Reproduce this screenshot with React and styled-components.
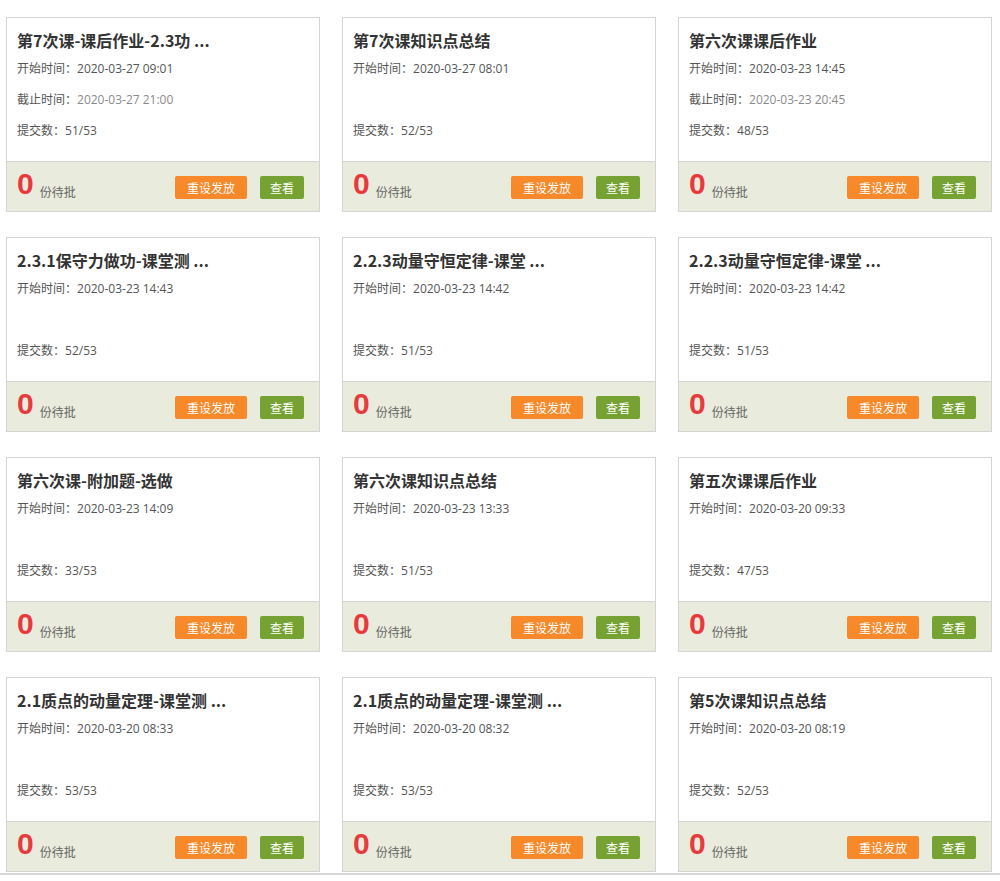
import React from "react";
import styled, { createGlobalStyle } from "styled-components";

const Global = createGlobalStyle`
  html, body { margin: 0; padding: 0; background: #fff; }
  body { font-family: "Noto Sans CJK SC", "Noto Sans", sans-serif; }
`;

const Page = styled.div`
  width: 1000px;
  height: 881px;
  overflow: hidden;
  box-sizing: border-box;
  padding: 17px 8px 0 6px;
`;

const Grid = styled.div`
  display: grid;
  grid-template-columns: repeat(3, 314px);
  column-gap: 22px;
  row-gap: 25px;
`;

const Card = styled.div`
  border: 1px solid #d4d4d4;
  background: #fff;
  display: flex;
  flex-direction: column;
`;

const Body = styled.div`
  height: 143px;
  box-sizing: border-box;
  padding: 10px 10px 0 10px;
`;

const Title = styled.div`
  font-size: 16px;
  font-weight: 700;
  color: #333;
  line-height: 24px;
  white-space: nowrap;
`;

const Info = styled.div`
  font-size: 12px;
  line-height: 31px;
  height: 31px;
  color: #555;
`;

const Muted = styled.span`
  color: ${(p) => (p.$light ? "#8a8a8a" : "#555")};
  font-family: "Open Sans", "Noto Sans CJK SC", sans-serif;
`;

const Footer = styled.div`
  height: 49px;
  box-sizing: border-box;
  border-top: 1px solid #d4d4d4;
  background: #e9ecdc;
  display: flex;
  align-items: center;
  padding: 2px 15px 0 10px;
  height: 50px;
`;

const Pending = styled.div`
  display: flex;
  align-items: flex-end;
  align-self: flex-start;
  margin-top: 5px;
  flex: 1;
`;

const Zero = styled.span`
  font-family: "Liberation Sans", Arial, sans-serif;
  font-weight: 700;
  font-size: 30px;
  line-height: 30px;
  color: #e8393c;
`;

const PendingLabel = styled.span`
  font-size: 12px;
  line-height: 14px;
  color: #666;
  margin-left: 6px;
`;

const Button = styled.button`
  border: none;
  border-radius: 2px;
  height: 23px;
  padding: 0;
  width: ${(p) => p.$w}px;
  background: ${(p) => p.$bg};
  color: #fff;
  font-family: "Noto Sans CJK SC", sans-serif;
  font-size: 12px;
  line-height: 23px;
  margin-left: ${(p) => p.$ml || 0}px;
  cursor: pointer;
`;

const BottomLine = styled.div`
  margin-top: 1px;
  margin-left: -6px;
  margin-right: -8px;
  border-top: 2px solid #d6d6d6;
`;

const items = [
  { title: "第7次课-课后作业-2.3功 ...", start: "2020-03-27 09:01", end: "2020-03-27 21:00", sub: "51/53" },
  { title: "第7次课知识点总结", start: "2020-03-27 08:01", sub: "52/53" },
  { title: "第六次课课后作业", start: "2020-03-23 14:45", end: "2020-03-23 20:45", sub: "48/53" },
  { title: "2.3.1保守力做功-课堂测 ...", start: "2020-03-23 14:43", sub: "52/53" },
  { title: "2.2.3动量守恒定律-课堂 ...", start: "2020-03-23 14:42", sub: "51/53" },
  { title: "2.2.3动量守恒定律-课堂 ...", start: "2020-03-23 14:42", sub: "51/53" },
  { title: "第六次课-附加题-选做", start: "2020-03-23 14:09", sub: "33/53" },
  { title: "第六次课知识点总结", start: "2020-03-23 13:33", sub: "51/53" },
  { title: "第五次课课后作业", start: "2020-03-20 09:33", sub: "47/53" },
  { title: "2.1质点的动量定理-课堂测 ...", start: "2020-03-20 08:33", sub: "53/53" },
  { title: "2.1质点的动量定理-课堂测 ...", start: "2020-03-20 08:32", sub: "53/53" },
  { title: "第5次课知识点总结", start: "2020-03-20 08:19", sub: "52/53" },
];

export default function App() {
  return (
    <>
      <Global />
      <Page>
        <Grid>
          {items.map((it, i) => (
            <Card key={i}>
              <Body>
                <Title>{it.title}</Title>
                <Info>
                  开始时间：<Muted>{it.start}</Muted>
                </Info>
                <Info>
                  {it.end ? (
                    <>
                      截止时间：<Muted $light>{it.end}</Muted>
                    </>
                  ) : null}
                </Info>
                <Info>
                  提交数：<Muted>{it.sub}</Muted>
                </Info>
              </Body>
              <Footer>
                <Pending>
                  <Zero>0</Zero>
                  <PendingLabel>份待批</PendingLabel>
                </Pending>
                <Button $w={72} $bg="#f8892a">重设发放</Button>
                <Button $w={44} $bg="#75a232" $ml={13}>查看</Button>
              </Footer>
            </Card>
          ))}
        </Grid>
        <BottomLine />
      </Page>
    </>
  );
}
